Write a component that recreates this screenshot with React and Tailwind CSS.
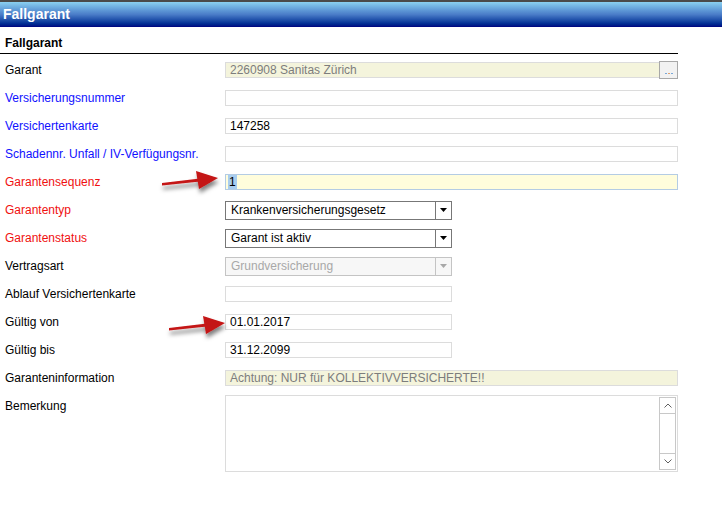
const font = { fontFamily: '"Liberation Sans", Arial, sans-serif' }

const Arrow = ({ className }) => (
  <svg className={className} width="70" height="30" viewBox="0 0 70 30">
    <defs>
      <filter id="sh" x="-20%" y="-50%" width="140%" height="200%">
        <feDropShadow dx="1" dy="4" stdDeviation="2" floodColor="#000" floodOpacity="0.5" />
      </filter>
    </defs>
    <g filter="url(#sh)">
      <path d="M4 16 L42 11.5 L42 14.5 L4 18.5 Z" fill="#c41414" />
      <path d="M38 4 L60 11 L41 22 Z" fill="#c41414" />
    </g>
  </svg>
)

const Row = ({ label, color = 'text-black', children }) => (
  <div className="flex h-[28px] items-center">
    <div className={`w-[225px] pl-[5px] text-[12px] ${color}`}>{label}</div>
    {children}
  </div>
)

const TextBox = ({ value, width = 'w-[453px]', className = 'bg-white border-[#dcdcdc] text-black' }) => (
  <div className={`h-[16px] ${width} border ${className} pl-[4px] text-[12px] leading-[14px]`}>{value}</div>
)

const Select = ({ value, disabled }) => (
  <div className={`flex h-[19px] w-[227px] border ${disabled ? 'border-[#c4c4c4] bg-[#f7f7f7] text-[#a8a8a8]' : 'border-[#777] bg-white text-black'}`}>
    <div className="flex-1 pl-[5px] text-[12px] leading-[17px]">{value}</div>
    <div className={`flex w-[16px] items-center justify-center border-l ${disabled ? 'border-[#c4c4c4]' : 'border-[#777]'}`}>
      <svg width="7" height="4" viewBox="0 0 7 4"><path d="M0 0 H7 L3.5 4 Z" fill={disabled ? '#a8a8a8' : '#000'} /></svg>
    </div>
  </div>
)

export default function App() {
  return (
    <div className="relative h-[515px] w-[722px] bg-white" style={font}>
      <div className="h-[27px] border-t-2 border-[#4a4a4a] bg-gradient-to-b from-[#8ad0f0] via-[#4a7cc8] to-[#000080] pl-[3px] text-[14px] font-bold leading-[24px] text-white">
        Fallgarant
      </div>
      <div className="w-[678px]">
        <div className="h-[27px] border-b border-black pl-[5px] pt-[7px] text-[12px] font-bold text-black">Fallgarant</div>
        <div className="mt-[2px]">
          <Row label="Garant">
            <div className="flex items-center">
              <TextBox value="2260908 Sanitas Zürich" width="w-[435px]" className="border-[#dcdcdc] bg-[#f4f4dc] text-[#7d7d7d]" />
              <div className="ml-[-1px] flex h-[18px] w-[19px] items-end justify-center gap-[1px] border border-[#a8a8a8] bg-[#f2f2f2] pb-[4px]">
                <span className="h-[1px] w-[2px] bg-[#7aa8d8]" />
                <span className="h-[1px] w-[2px] bg-[#e0a070]" />
                <span className="h-[1px] w-[2px] bg-[#7aa8d8]" />
              </div>
            </div>
          </Row>
          <Row label="Versicherungsnummer" color="text-[#1010ff]"><TextBox /></Row>
          <Row label="Versichertenkarte" color="text-[#1010ff]"><TextBox value="147258" /></Row>
          <Row label="Schadennr. Unfall / IV-Verfügungsnr." color="text-[#1010ff]"><TextBox /></Row>
          <Row label="Garantensequenz" color="text-[#f01010]">
            <div className="h-[16px] w-[453px] border border-[#b4cce4] bg-[#fffddc] pl-[2px] text-[12px] leading-[14px] text-black">
              <span className="bg-[#a8cdef] px-[1px]">1</span>
            </div>
          </Row>
          <Row label="Garantentyp" color="text-[#f01010]"><Select value="Krankenversicherungsgesetz" /></Row>
          <Row label="Garantenstatus" color="text-[#f01010]"><Select value="Garant ist aktiv" /></Row>
          <Row label="Vertragsart"><Select value="Grundversicherung" disabled /></Row>
          <Row label="Ablauf Versichertenkarte"><TextBox width="w-[227px]" /></Row>
          <Row label="Gültig von"><TextBox value="01.01.2017" width="w-[227px]" /></Row>
          <Row label="Gültig bis"><TextBox value="31.12.2099" width="w-[227px]" /></Row>
          <Row label="Garanteninformation">
            <TextBox value="Achtung: NUR für KOLLEKTIVVERSICHERTE!!" className="border-[#dcdcdc] bg-[#f4f4dc] text-[#7d7d7d]" />
          </Row>
          <div className="mt-[3px] flex">
            <div className="w-[225px] pl-[5px] pt-[2px] text-[12px] text-black">Bemerkung</div>
            <div className="flex h-[77px] w-[453px] justify-end border border-[#dcdcdc] bg-white p-[1px]">
              <div className="flex w-[17px] flex-col justify-between border border-[#c8c8c8]">
                <div className="flex h-[16px] items-center justify-center border-b border-[#c8c8c8]">
                  <svg width="8" height="5" viewBox="0 0 8 5"><path d="M0.5 4.5 L4 1 L7.5 4.5" fill="none" stroke="#606060" strokeWidth="1" /></svg>
                </div>
                <div className="flex h-[16px] items-center justify-center border-t border-[#c8c8c8]">
                  <svg width="8" height="5" viewBox="0 0 8 5"><path d="M0.5 0.5 L4 4 L7.5 0.5" fill="none" stroke="#606060" strokeWidth="1" /></svg>
                </div>
              </div>
            </div>
          </div>
        </div>
      </div>
      <Arrow className="absolute left-[158px] top-[167px]" />
      <Arrow className="absolute left-[165px] top-[312px]" />
    </div>
  )
}
